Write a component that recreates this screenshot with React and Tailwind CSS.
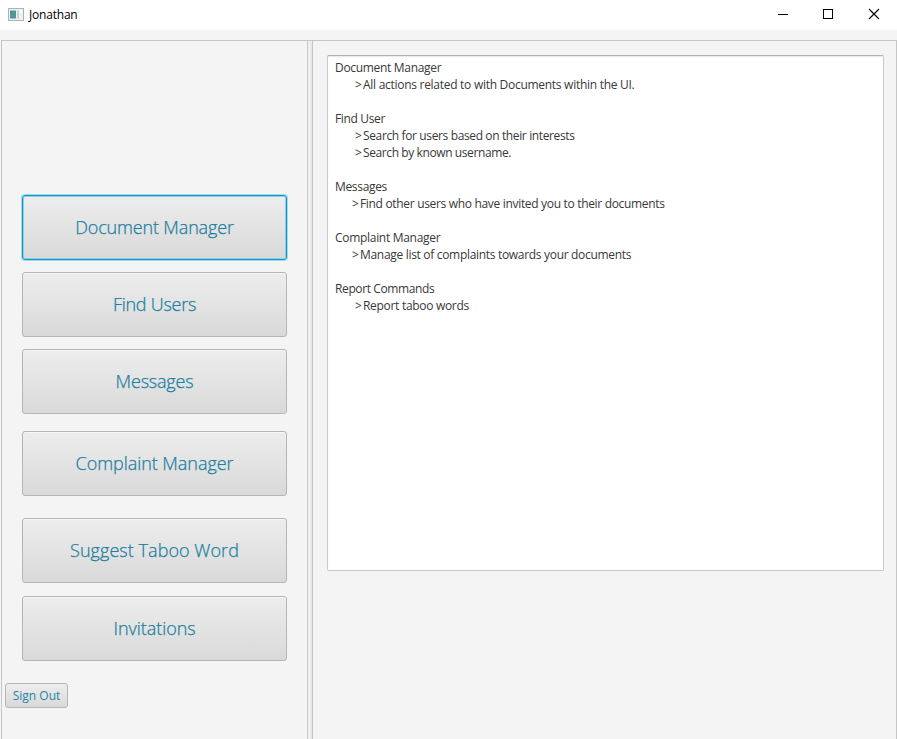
const lines = [
  ['Document Manager', 'tracking-[-0.31px]'],
  ['>All actions related to with Documents within the UI.', 'pl-5 tracking-[-0.28px]'],
  ['', ''],
  ['Find User', 'tracking-[-0.35px]'],
  ['>Search for users based on their interests', 'pl-5 tracking-[-0.37px]'],
  ['>Search by known username.', 'pl-5 tracking-[-0.4px]'],
  ['', ''],
  ['Messages', 'tracking-[-0.33px]'],
  ['>Find other users who have invited you to their documents', 'pl-[17px] tracking-[-0.32px]'],
  ['', ''],
  ['Complaint Manager', 'tracking-[-0.3px]'],
  ['>Manage list of complaints towards your documents', 'pl-[17px] tracking-[-0.31px]'],
  ['', ''],
  ['Report Commands', 'tracking-[-0.38px]'],
  ['>Report taboo words', 'pl-5 tracking-[-0.3px]'],
];

const buttons = [
  ['Document Manager', '', 'tracking-[-0.15px]'],
  ['Find Users', 'mt-3', 'tracking-[-0.25px]'],
  ['Messages', 'mt-3', 'tracking-[-0.2px]'],
  ['Complaint Manager', 'mt-[17px]', 'tracking-[-0.05px]'],
  ['Suggest Taboo Word', 'mt-[22px]', 'tracking-[0.05px]'],
  ['Invitations', 'mt-[13px]', 'tracking-[-0.05px]'],
];

const face = 'rounded-[3px] border bg-linear-to-b from-[#ededed] to-[#d9d9d9] flex items-center justify-center whitespace-nowrap';

export default function App() {
  return (
    <div className="w-[897px] h-[739px] overflow-hidden bg-[#f4f4f4] flex flex-col font-['Open_Sans','Noto_Sans',sans-serif]">
      <header className="h-[30px] shrink-0 bg-white flex items-center justify-between">
        <div className="flex items-center pl-2 gap-[5px]">
          <svg width="16" height="14" viewBox="0 0 16 14">
            <rect x=".5" y=".5" width="15" height="12" fill="#eef0f1" stroke="#a9b4ba" />
            <rect x="2" y="2.5" width="6" height="8" fill="#4f9594" />
            <rect x="9" y="2.5" width="2" height="8" fill="#c9d3d6" />
            <rect x="12" y="2" width="2" height="3" fill="#fff" />
          </svg>
          <span className="text-[12px] leading-none text-black tracking-[-0.2px]">Jonathan</span>
        </div>
        <svg width="137" height="30" viewBox="0 0 137 30" fill="none" stroke="#000" shapeRendering="crispEdges">
          <path d="M18 14.5h10M63.5 9.5h9v9h-9z" />
          <path d="M109 9l10 10M119 9l-10 10" shapeRendering="auto" strokeWidth="1.2" />
        </svg>
      </header>
      <main className="flex-1 pt-[10px] pl-px flex">
        <section className="w-[307px] border-t border-x border-[#c6c6c6] pt-[154px]">
          <div className="pl-5">
            {buttons.map(([label, gap, tracking], i) => (
              <div key={label} className={`${face} ${gap} ${tracking} w-[265px] h-[65px] text-[18px] font-light [-webkit-text-stroke:0.25px] text-[#1a7fa0] ${i === 0 ? 'border-[#1593c4] shadow-[0_0_0_1px_#9bdcf0,inset_0_0_0_1px_#8fcfe6]' : 'border-[#b5b5b5] shadow-[inset_0_1px_0_#f6f6f6]'}`}>
                {label}
              </div>
            ))}
          </div>
          <div className={`${face} border-[#b5b5b5] text-[#2385a5] ml-[3px] mt-[22px] w-[63px] h-[25px] text-[12px]`}>Sign Out</div>
        </section>
        <div className="w-1 border-t border-[#c6c6c6] bg-linear-to-r from-[#f4f4f4] to-[#e6e6e6]" />
        <section className="flex-1 border-t border-x border-[#c6c6c6] pt-[14px] pl-[14px]">
          <div className="w-[557px] h-[516px] rounded-[2px] border border-[#c8c8c8] border-t-[#b3b3b3] bg-white shadow-[inset_0_1px_1px_#e8e8e8] pt-[3px] pl-[7px] text-[12px] leading-[17px] text-[#383838]">
            {lines.map(([text, style], i) => (
              <div key={i} className={`${style} h-[17px] whitespace-nowrap`}>
                {text[0] === '>' ? <><span className="inline-block w-2">&gt;</span>{text.slice(1)}</> : text}
              </div>
            ))}
          </div>
        </section>
      </main>
    </div>
  );
}
